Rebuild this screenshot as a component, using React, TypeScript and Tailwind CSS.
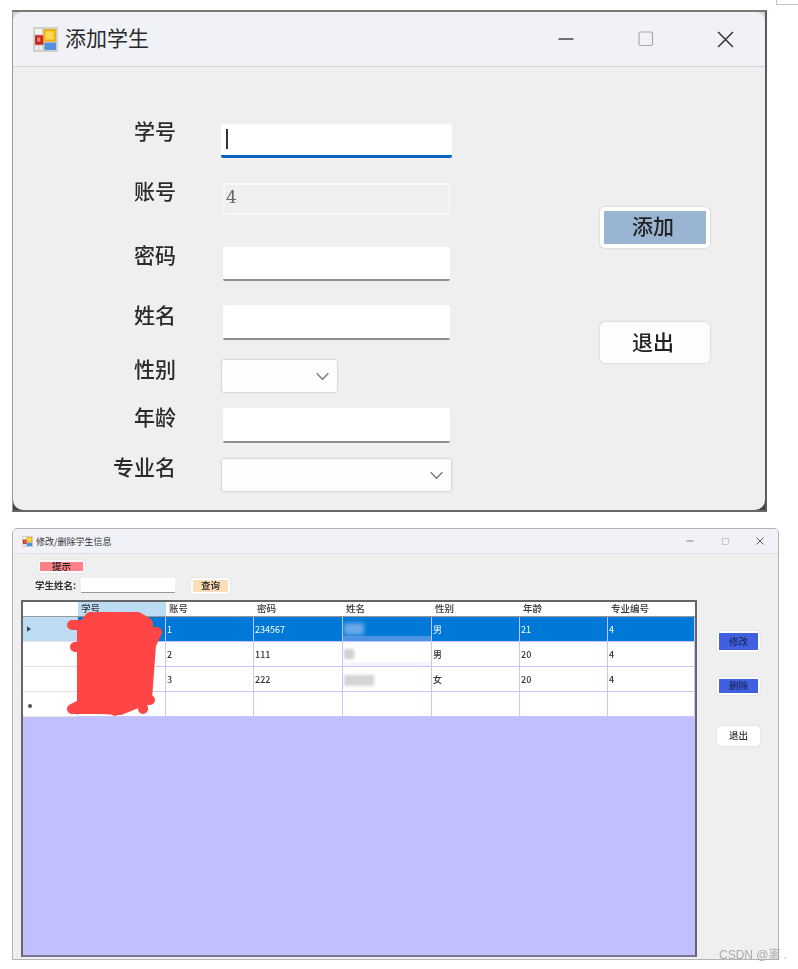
import React from "react";

const CJK = '"Noto Sans CJK SC", "Noto Sans", sans-serif';

function AppIcon({ className }: { className: string }) {
  return (
    <svg viewBox="0 0 24 24" className={`shrink-0 ${className}`}>
      <rect x="0" y="0" width="24" height="24" fill="#cfcfcb" />
      <rect x="2" y="2" width="7" height="5" fill="#f4f4f4" />
      <rect x="2" y="18" width="3" height="4" fill="#eeeeee" />
      <rect x="6" y="18" width="3" height="4" fill="#eeeeee" />
      <rect x="2" y="8" width="8" height="9" fill="#c8261e" />
      <rect x="4" y="10" width="3" height="4" fill="#f08a70" />
      <rect x="10" y="2" width="12" height="12" fill="#eeb10c" />
      <rect x="12" y="4" width="8" height="8" fill="#fbd555" />
      <rect x="11" y="15" width="11" height="7" fill="#4f8fe0" />
    </svg>
  );
}

function WinControls({ big }: { big: boolean }) {
  return big ? (
    <div className="flex items-center pl-[409px]">
      <svg viewBox="0 0 16 16" className="w-[16px] h-[16px]"><path d="M0.5 8h15" stroke="#444" strokeWidth="1.4" /></svg>
      <svg viewBox="0 0 16 16" className="w-[16px] h-[16px] ml-[64px]"><rect x="1" y="1" width="13.5" height="13.5" rx="1.5" fill="none" stroke="#a8a8ac" strokeWidth="1.2" /></svg>
      <svg viewBox="0 0 16 16" className="w-[17px] h-[17px] ml-[63px]"><path d="M1 1l14 14M15 1L1 15" stroke="#333" strokeWidth="1.4" /></svg>
    </div>
  ) : (
    <div className="flex items-center ml-auto mr-[14px]">
      <svg viewBox="0 0 8 8" className="w-[8px] h-[8px]"><path d="M0.5 4h7" stroke="#777" strokeWidth="0.9" /></svg>
      <svg viewBox="0 0 8 8" className="w-[7px] h-[7px] ml-[28px]"><rect x="0.5" y="0.5" width="7" height="7" fill="none" stroke="#bbb" strokeWidth="0.8" /></svg>
      <svg viewBox="0 0 8 8" className="w-[8px] h-[8px] ml-[27px]"><path d="M0.5 0.5l7 7M7.5 0.5l-7 7" stroke="#444" strokeWidth="0.9" /></svg>
    </div>
  );
}

function Chevron({ className }: { className: string }) {
  return (
    <svg viewBox="0 0 16 10" className={className}>
      <path d="M1.5 1.5L8 8l6.5-6.5" fill="none" stroke="#777" strokeWidth="1.5" />
    </svg>
  );
}

function TextBox({ top }: { top: string }) {
  return <input readOnly className={`block w-[227px] ml-[2px] bg-white border-b-2 border-[#8f8f8f] rounded-[2px] outline-none ${top}`} />;
}

function Select({ width }: { width: string }) {
  return (
    <div className={`flex items-center justify-end h-[32px] bg-[#fdfdfd] rounded-[2px] shadow-[0_0_2px_#9a9a9a] ml-[1px] pr-[7px] ${width}`}>
      <Chevron className="w-[15px] h-[9px]" />
    </div>
  );
}

function Label({ text, className }: { text: string; className: string }) {
  return <div className={`w-[163px] text-right text-[21px] leading-[28px] font-medium text-[#2a2a2a] shrink-0 mr-[45px] ${className}`}>{text}</div>;
}

const headers = ["学号", "账号", "密码", "姓名", "性别", "年龄", "专业编号"];
const rows = [
  ["", "1", "234567", "", "男", "21", "4"],
  ["", "2", "111", "", "男", "20", "4"],
  ["", "3", "222", "", "女", "20", "4"],
  ["", "", "", "", "", "", ""],
];

function NameBlur({ row }: { row: number }) {
  if (row === 0)
    return (
      <div className="flex flex-col h-full">
        <div className="flex-1 pt-[6px] pl-[1px]"><div className="w-[20px] h-[12px] bg-[#6aa9e8] blur-[2px]" /></div>
        <div className="h-[5px] bg-[#4a92e2]" />
      </div>
    );
  if (row === 1)
    return (
      <div className="flex flex-col h-full">
        <div className="flex-1 pt-[7px] pl-[1px]"><div className="w-[10px] h-[10px] bg-[#cfcfcf] blur-[1.5px]" /></div>
        <div className="h-[4px] bg-[#f4f4fc]" />
      </div>
    );
  if (row === 2)
    return <div className="pt-[8px] pl-[1px]"><div className="w-[30px] h-[11px] bg-[#d4d4d4] blur-[1.8px]" /></div>;
  return null;
}

function RowHead({ row }: { row: number }) {
  if (row === 0)
    return (
      <div className="h-full bg-[#bcdcf4] flex items-center pl-[4px]">
        <svg viewBox="0 0 5 7" className="w-[4px] h-[6px]"><path d="M0 0l5 3.5L0 7z" fill="#444" /></svg>
      </div>
    );
  if (row === 3)
    return <div className="h-full flex items-center pl-[5px] pt-[3px]"><div className="w-[4px] h-[4px] rounded-full bg-[#555]" /></div>;
  return null;
}

function ButtonSmall({ text, h, inner, color, mt }: { text: string; h: string; inner: string; color: string; mt: string }) {
  return (
    <div className={`w-[43px] ${h} ${mt} bg-white rounded-[3px] shadow-[0_0_1px_#aaa] p-[2px] flex`}>
      <div className={`flex-1 flex items-center justify-center text-[9.5px] font-medium leading-none ${inner} ${color}`}>{text}</div>
    </div>
  );
}

export default function App() {
  return (
    <div className="relative w-[798px] h-[969px] bg-white overflow-hidden pt-[10px] pl-[12px]" style={{ fontFamily: CJK }}>
      <div className="absolute right-0 top-0 w-[22px] h-[5px] border-l border-b border-[#c4c4c4]" />

      {/* Window 1 */}
      <div className="w-[755px] h-[502px] bg-linear-to-b from-[#d4d4d0] from-90% to-[#3f4a3a] to-95% border-t-2 border-t-[#7d7873] border-l border-l-[#9a9a96] border-r-2 border-r-[#5a5a60] border-b-2 border-b-[#666]">
        <div className="h-full rounded-[10px] overflow-hidden bg-[#efefef] blur-[0.35px]">
          <div className="flex items-center h-[55px] bg-[#f0f2f8] border-b border-[#d2d4da] pl-[20px]">
            <AppIcon className="w-[25px] h-[25px]" />
            <div className="ml-[7px] mb-[5px] w-[84px] shrink-0 text-[21px] leading-[28px] text-[#2a2a2a] whitespace-nowrap">添加学生</div>
            <WinControls big />
          </div>
          <div className="flex">
            <div className="w-[587px] pt-[57px]">
              <div className="flex items-start h-[34px]">
                <Label text="学号" className="-mt-[8px]" />
                <div className="w-[231px] h-[34px] bg-white border-b-[3px] border-[#0067c0] mt-0 pl-[5px] pt-[5px] rounded-[2px]">
                  <div className="w-[2px] h-[20px] bg-[#333]" />
                </div>
              </div>
              <div className="flex items-start h-[32px] mt-[25px]">
                <Label text="账号" className="-mt-[7px]" />
                <div className="w-[227px] h-[32px] ml-[2px] border-2 border-[#f6f6f6] pl-[1px] text-[17px] leading-[24px] text-[#666]" style={{ fontFamily: '"DejaVu Serif", serif' }}>4</div>
              </div>
              <div className="flex items-start h-[34px] mt-[32px]">
                <Label text="密码" className="-mt-[7px]" />
                <TextBox top="h-[34px]" />
              </div>
              <div className="flex items-start h-[35px] mt-[24px]">
                <Label text="姓名" className="-mt-[5px]" />
                <TextBox top="h-[35px]" />
              </div>
              <div className="flex items-start h-[32px] mt-[20px]">
                <Label text="性别" className="-mt-[6px]" />
                <Select width="w-[115px]" />
              </div>
              <div className="flex items-start h-[35px] mt-[16px]">
                <Label text="年龄" className="-mt-[6px]" />
                <TextBox top="h-[35px]" />
              </div>
              <div className="flex items-start h-[32px] mt-[16px]">
                <Label text="专业名" className="-mt-[7px]" />
                <Select width="w-[229px]" />
              </div>
            </div>
            <div className="pt-[140px]">
              <div className="w-[110px] h-[41px] bg-white rounded-[5px] shadow-[0_0_2px_#b5b5b5] p-[4px] flex">
                <div className="flex-1 bg-[#9ab5d3] flex items-center justify-center pb-[4px] pr-[4px] text-[21px] font-medium leading-none text-[#222]">添加</div>
              </div>
              <div className="w-[110px] h-[41px] mt-[74px] bg-[#fdfdfd] rounded-[5px] shadow-[0_0_2px_#b5b5b5] flex items-center justify-center pb-[3px] pr-[4px] text-[21px] font-medium leading-none text-[#222]">退出</div>
            </div>
          </div>
        </div>
      </div>

      {/* Window 2 */}
      <div className="mt-[16px] w-[767px] h-[432px] border border-[#b4b4b4] rounded-t-[5px] bg-[#efefef] overflow-hidden">
        <div className="blur-[0.3px] h-full">
          <div className="flex items-center h-[25px] bg-[#f0f2f8] border-b border-[#dcdee4] pl-[9px]">
            <AppIcon className="w-[11px] h-[11px]" />
            <div className="ml-[3px] text-[9px] leading-none text-[#333] whitespace-nowrap">修改/删除学生信息</div>
            <WinControls big={false} />
          </div>
          <div className="flex">
            <div className="w-[684px] pl-[8px]">
              <div className="ml-[17px] mt-[6px] w-[47px] h-[13px] bg-[#fafafa] rounded-[2px] shadow-[0_0_1px_#aaa] p-[2px] flex">
                <div className="flex-1 bg-[#ff8088] flex items-center justify-center text-[9.5px] font-medium leading-none text-[#222]">提示</div>
              </div>
              <div className="flex items-start mt-[5px] ml-[14px]">
                <div className="w-[46px] text-[9.5px] leading-[14px] text-[#333] font-bold whitespace-nowrap">学生姓名:</div>
                <div className="w-[94px] h-[15px] bg-white border-b border-[#999]" />
                <div className="ml-[16px] w-[39px] h-[16px] bg-white rounded-[2px] shadow-[0_0_1px_#aaa] p-[2px] flex">
                  <div className="flex-1 bg-[#fddcb8] flex items-center justify-center text-[9.5px] font-medium leading-none text-[#222]">查询</div>
                </div>
              </div>
              <div className="mt-[6px] w-[676px] h-[357px] border-2 border-[#666] border-b-[#77758f] bg-[#c0bfff]">
                <div className="grid grid-cols-[55px_88px_88px_89px_89px_88px_88px_87px] grid-rows-[15px_25px_25px_25px_25px] text-[9px] leading-none">
                  <div className="bg-white border-b border-[#999]" />
                  {headers.map((h, i) => (
                    <div key={h} className={`flex items-center pl-[3px] text-[9.5px] font-medium text-[#333] border-b border-[#999] ${i === 0 ? "bg-[#bcdcf4]" : "bg-white"}`}>{h}</div>
                  ))}
                  {rows.map((r, ri) => (
                    <React.Fragment key={ri}>
                      <div className="bg-white border-b border-[#e2e2e8] border-r border-r-[#cfcfdc] overflow-hidden"><RowHead row={ri} /></div>
                      {r.map((c, ci) => (
                        <div
                          key={ci}
                          className={`border-r border-b border-[#c6c6ff] ${ri === 0 ? "bg-[#0078d7] text-white" : "bg-white text-[#333] font-medium"} ${ci === 3 ? "" : "flex items-center pl-[1px]"}`}
                        >
                          {ci === 3 ? <NameBlur row={ri} /> : c}
                        </div>
                      ))}
                    </React.Fragment>
                  ))}
                </div>
              </div>
            </div>
            <div className="ml-[20px] pt-[77px]">
              <ButtonSmall text="修改" h="h-[21px]" mt="" inner="bg-[#4060e0]" color="text-[#1a2a60]" />
              <ButtonSmall text="删除" h="h-[18px]" mt="mt-[25px]" inner="bg-[#4060e0]" color="text-[#1a2a60]" />
              <ButtonSmall text="退出" h="h-[20px]" mt="mt-[31px]" inner="bg-white" color="text-[#333]" />
            </div>
          </div>
        </div>
      </div>

      {/* Red scribble drawn over the table */}
      <svg viewBox="0 0 110 115" className="absolute left-[60px] top-[605px] w-[110px] h-[115px] blur-[0.3px]">
        <g fill="#ff4545" stroke="#ff4545" strokeWidth="10" strokeLinejoin="round" strokeLinecap="round">
          <path d="M30 12H78L88 18V28L97 27L91 40L87 94L60 105L22 103L22 45L22 22Z" />
          <path d="M12 20H30M15 42H24M12 104L24 98M12 104H60M88 95H90M83 103V104M55 106V105" fill="none" />
        </g>
      </svg>

      {/* Watermark */}
      <div className="absolute left-[719px] top-[948px] text-[12px] leading-[14px] text-[#9a9a9a] opacity-80 whitespace-nowrap" style={{ fontFamily: '"Liberation Sans", "Noto Sans CJK SC", sans-serif' }}>CSDN @离 .</div>
    </div>
  );
}
